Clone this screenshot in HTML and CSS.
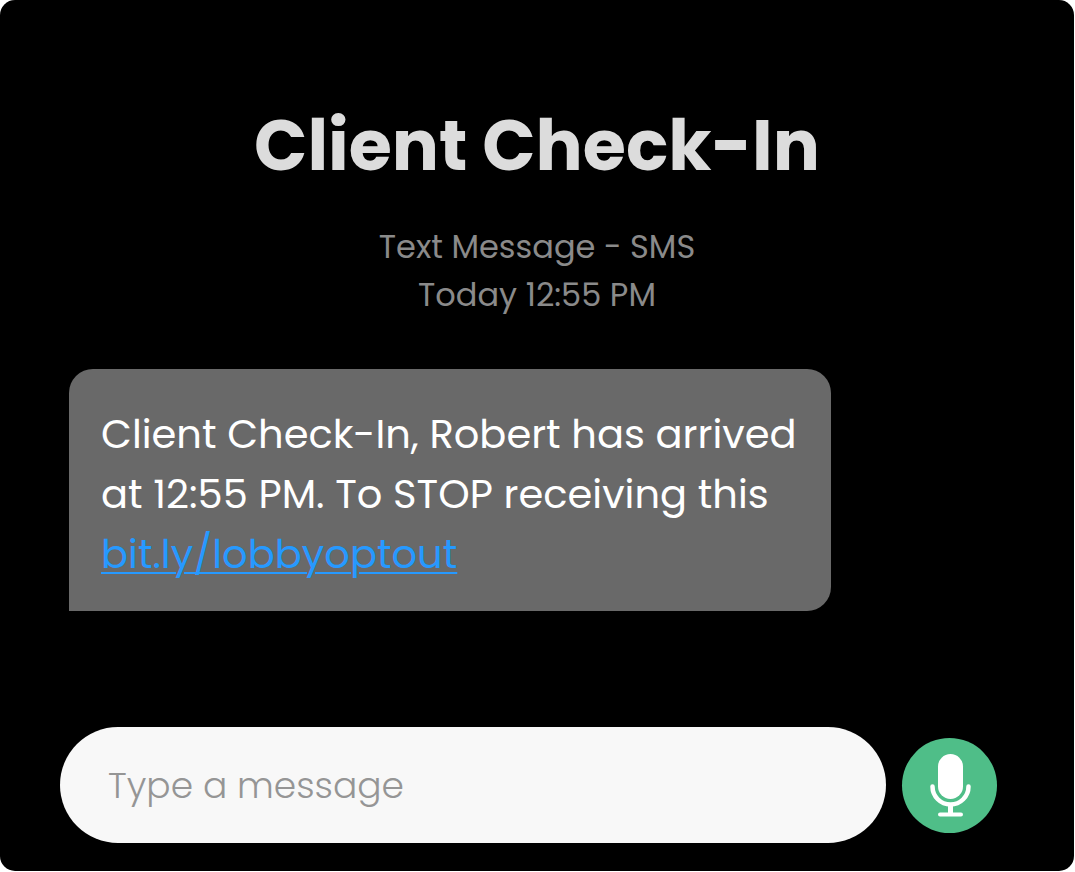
FILE: index.html
```html
<!DOCTYPE html>
<html lang="en">
<head>
  <meta charset="UTF-8">
  <title>Client Check-In</title>
  <meta name="viewport" content="width=device-width,initial-scale=1">
  <link rel="stylesheet" href="styles.css">
</head>
<body>
  <main class="screen">
    <header class="header">
      <h1>Client Check-In</h1>
      <p class="meta">Text Message - SMS<br>Today 12:55 PM</p>
    </header>
    <div class="bubble">
      <p>Client Check-In, Robert has arrived<br>at 12:55 PM. To STOP receiving this<br><a href="https://bit.ly/lobbyoptout">bit.ly/lobbyoptout</a></p>
    </div>
    <form class="composer">
      <input type="text" class="message" placeholder="Type a message" aria-label="Type a message">
      <button type="button" class="mic" aria-label="Record a voice message">
        <svg viewBox="0 0 95 95" aria-hidden="true">
          <rect x="36" y="16" width="25" height="45" rx="12.5" fill="#fff"/>
          <g fill="none" stroke="#fff" stroke-linecap="round">
            <path d="M30.500 48.500a18 18 0 0 0 36 0" stroke-width="4.500"/>
            <path d="M48.500 67v9" stroke-width="5" stroke-linecap="butt"/>
            <path d="M38 76.500h21" stroke-width="4"/>
          </g>
        </svg>
      </button>
    </form>
  </main>
</body>
</html>
```
FILE: styles.css
```css
* { box-sizing: border-box; }
body { margin: 0; padding: 0 1px 1px 0; background: #fff; font-family: Poppins, 'Open Sans', sans-serif; }
.screen { display: flex; flex-direction: column; min-height: calc(100vh - 1px); padding: 94px 60px 28px; background: #000; border-radius: 15px; }
.header { text-align: center; }
h1 { margin: 0; color: #dcdcdc; font-size: 70px; line-height: 104px; font-weight: 700; }
.meta { margin: 25px 0 0; color: #8a8a8a; font-size: 32px; line-height: 48px; }
.bubble { align-self: flex-start; width: 762px; max-width: 100%; margin: 50px 0 0 9px; padding: 35px 32px 27px; background: #696969; border-radius: 24px 24px 24px 0; color: #fff; font-size: 40px; line-height: 60px; }
.bubble p { margin: 0; }
.bubble a { color: #2699ff; text-decoration-thickness: 2px; text-underline-offset: 4px; }
.composer { display: flex; align-items: center; gap: 16px; margin-top: auto; padding-right: 17px; }
.message { flex: 1; min-width: 0; height: 116px; padding: 0 48px; border: none; border-radius: 58px; background: #f8f8f8; color: #333; font: inherit; font-size: 36px; font-weight: 300; }
.message::placeholder { color: #959595; opacity: 1; }
.mic { flex: none; width: 95px; height: 95px; padding: 0; border: none; border-radius: 50%; background: #4fbe88; cursor: pointer; }
.mic svg { display: block; width: 100%; }
@media (max-width: 700px) {
  .screen { padding: 48px 20px 20px; }
  .bubble { margin-left: 0; font-size: 24px; line-height: 36px; }
  .composer { padding-right: 0; margin-top: 40px; }
  h1 { font-size: 40px; line-height: 60px; }
}
```
